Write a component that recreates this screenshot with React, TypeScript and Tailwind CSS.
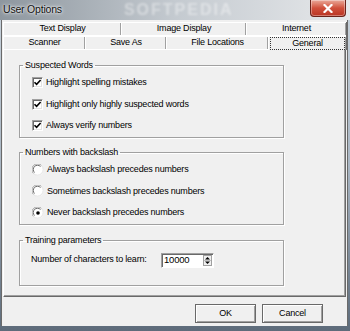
import React from "react";

const font = "font-['Liberation_Sans',Arial,sans-serif]";

function Check() {
  return (
    <span className="inline-flex h-[11px] w-[11px] shrink-0 items-center justify-center border border-t-[#a0a0a0] border-l-[#a0a0a0] border-r-white border-b-white bg-white shadow-[inset_1px_1px_0_#696969,inset_-1px_-1px_0_#e3e3e3]">
      <svg width="9" height="9" viewBox="0 0 9 9">
        <path d="M1.5 4.2 L3.6 6.4 L7.6 2" fill="none" stroke="#000" strokeWidth="1.6" />
      </svg>
    </span>
  );
}

function Radio({ on }: { on?: boolean }) {
  return (
    <svg width="12" height="12" viewBox="0 0 12 12" className="shrink-0">
      <circle cx="6" cy="6" r="5.5" fill="#fff" />
      <path d="M1.5 9.5 A5 5 0 0 1 9.5 1.5" fill="none" stroke="#a0a0a0" strokeWidth="1" />
      <path d="M2.5 8.5 A3.8 3.8 0 0 1 8.5 2.5" fill="none" stroke="#696969" strokeWidth="1" />
      <path d="M9.5 1.5 A5 5 0 0 1 1.5 9.5" fill="none" stroke="#e3e3e3" strokeWidth="1" />
      {on && <circle cx="6" cy="6" r="1.8" fill="#000" />}
    </svg>
  );
}

function Tab({ label, w, selected }: { label: string; w: string; selected?: boolean }) {
  return (
    <div
      className={
        w +
        " flex h-full items-center justify-center border-t border-l border-white shadow-[inset_-1px_0_0_#a0a0a0,1px_0_0_#696969] " +
        (selected ? "" : "border-b border-b-white")
      }
    >
      {selected ? (
        <span className="flex h-[13px] w-[75px] items-center justify-center border border-dotted border-[#333]">{label}</span>
      ) : (
        <span>{label}</span>
      )}
    </div>
  );
}

function Group({ title, h, mt, children }: { title: string; h: string; mt: string; children: React.ReactNode }) {
  return (
    <fieldset
      className={
        h +
        " " +
        mt +
        " ml-[15px] w-[265px] border border-[#a0a0a0] shadow-[inset_1px_1px_0_#fff,1px_1px_0_#fff]"
      }
    >
      <legend className="ml-[3px] px-[2px] leading-[12px]">{title}</legend>
      {children}
    </fieldset>
  );
}

function Row({ children }: { children: React.ReactNode }) {
  return <div className="flex h-[21.5px] items-center gap-[3px] pl-[12px]">{children}</div>;
}

function Button({ label }: { label: string }) {
  return (
    <button className="h-[19px] w-[61px] border border-[#696969] bg-[#f0f0f0] shadow-[inset_1px_1px_0_#fff,inset_-1px_-1px_0_#a0a0a0] text-black">
      {label}
    </button>
  );
}

export default function App() {
  return (
    <div
      className={
        font +
        " relative flex h-[331px] w-[350px] flex-col overflow-hidden bg-gradient-to-b from-[#c9d3dc] via-[#aab7c4] to-[#5d6b7a] text-[9px] tracking-[-0.2px] text-black"
      }
    >
      {/* title bar */}
      <div className="relative flex h-[20px] items-center overflow-hidden bg-gradient-to-r from-[#8e979f] via-[#c4cad0] to-[#e6e8ea] pl-[3px]">
        <span className="text-[10.5px] tracking-[-0.2px] text-[#111] [text-shadow:0_0_4px_#fff,0_0_2px_#fff]">User Options</span>
        <span className="ml-[62px] text-[16px] leading-[18px] font-bold tracking-[2px] text-white/40 blur-[1.2px]">SOFTPEDIA</span>
        <div className="absolute right-[4px] top-0 flex h-[17px] w-[36px] items-center justify-center rounded-b-[4px] border border-t-0 border-[#6b231a] bg-gradient-to-b from-[#e9a99a] via-[#d0503c] to-[#b93422] shadow-[inset_0_0_0_1px_rgba(255,255,255,0.35)]">
          <svg width="10" height="9" viewBox="0 0 10 9">
            <path d="M1.5 1 L8.5 8 M8.5 1 L1.5 8" stroke="#fff" strokeWidth="2.2" strokeLinecap="square" />
          </svg>
        </div>
      </div>

      {/* client area */}
      <div className="ml-[2px] mr-[3px] flex h-[306px] flex-col bg-[#f0f0f0] px-[1px] pt-[2px] shadow-[-1px_0_0_#6a6a6a,1px_0_0_#6a6a6a]">
        <div className="flex h-[14px]">
          <Tab label="Text Display" w="w-[118px]" />
          <Tab label="Image Display" w="w-[125px]" />
          <Tab label="Internet" w="w-[100px]" />
        </div>
        <div className="flex h-[14px]">
          <Tab label="Scanner" w="w-[82px]" />
          <Tab label="Save As" w="w-[81px]" />
          <Tab label="File Locations" w="w-[102px]" />
          <Tab label="General" w="w-[78px]" selected />
        </div>

        {/* tab page */}
        <div className="flex h-[247px] w-[343px] flex-col border-l border-l-white border-r border-r-[#696969] border-b border-b-[#696969] shadow-[inset_-1px_-1px_0_#a0a0a0]">
          <Group title="Suspected Words" h="h-[79px]" mt="mt-[9px]">
            <div className="pt-[1px]">
              <Row>
                <Check />
                <span>Highlight spelling mistakes</span>
              </Row>
              <Row>
                <Check />
                <span>Highlight only highly suspected words</span>
              </Row>
              <Row>
                <Check />
                <span>Always verify numbers</span>
              </Row>
            </div>
          </Group>

          <Group title="Numbers with backslash" h="h-[79px]" mt="mt-[8px]">
            <div className="pt-[1px]">
              <Row>
                <Radio />
                <span>Always backslash precedes numbers</span>
              </Row>
              <Row>
                <Radio />
                <span>Sometimes backslash precedes numbers</span>
              </Row>
              <Row>
                <Radio on />
                <span>Never backslash precedes numbers</span>
              </Row>
            </div>
          </Group>

          <Group title="Training parameters" h="h-[52px]" mt="mt-[9px]">
            <div className="mt-[6px] flex h-[16px] items-center pl-[11px]">
              <span className="w-[130px]">Number of characters to learn:</span>
              <div className="flex h-[15px] w-[53px] items-center border border-t-[#a0a0a0] border-l-[#a0a0a0] border-r-white border-b-white bg-white shadow-[inset_1px_1px_0_#696969]">
                <span className="flex-1 pl-[2px] text-[9.5px]">10000</span>
                <div className="mr-[1px] flex h-[11px] w-[9px] flex-col border border-[#a0a0a0] bg-[#f0f0f0]">
                  <svg width="7" height="9" viewBox="0 0 7 9">
                    <path d="M3.5 1 L6 3.5 L1 3.5 Z" fill="#000" />
                    <path d="M1 5.5 L6 5.5 L3.5 8 Z" fill="#000" />
                    <path d="M0 4.5 H7" stroke="#a0a0a0" strokeWidth="0.6" />
                  </svg>
                </div>
              </div>
            </div>
          </Group>
        </div>

        {/* buttons */}
        <div className="flex flex-1 items-start justify-end gap-[6px] pr-[23px] pt-[7px]">
          <Button label="OK" />
          <Button label="Cancel" />
        </div>
      </div>
    </div>
  );
}
